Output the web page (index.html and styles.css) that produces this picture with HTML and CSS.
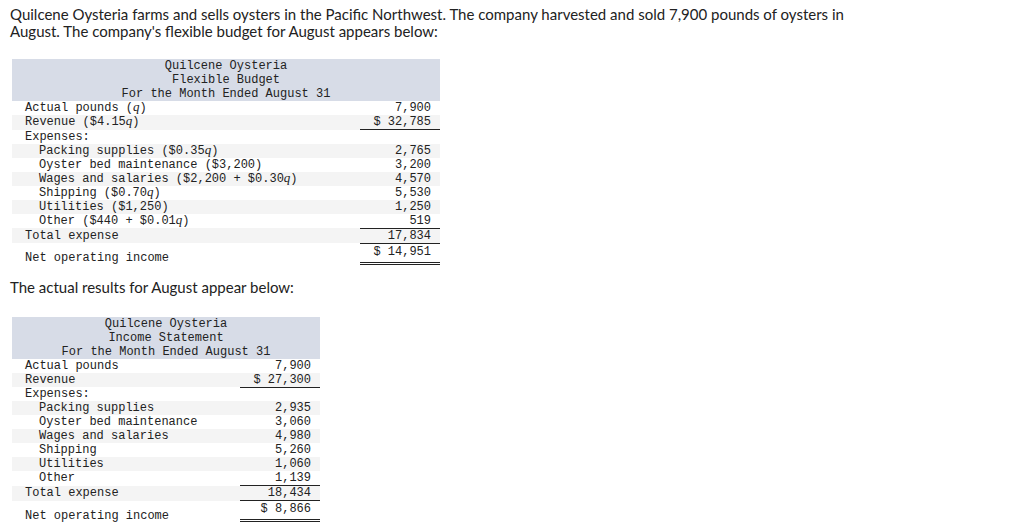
FILE: index.html
```html
<!DOCTYPE html>
<html>
<head>
<meta charset="utf-8">
<link rel="stylesheet" href="styles.css">
</head>
<body>
<p class="intro">Quilcene Oysteria farms and sells oysters in the Pacific Northwest. The company harvested and sold 7,900 pounds of oysters in<br>August. The company's flexible budget for August appears below:</p>

<table class="fin fin-wide">
  <thead>
    <tr><th colspan="2">Quilcene Oysteria<br>Flexible Budget<br>For the Month Ended August 31</th></tr>
  </thead>
  <tbody>
    <tr><td class="lbl">Actual pounds (<i>q</i>)</td><td class="num">7,900</td></tr>
    <tr><td class="lbl">Revenue ($4.15<i>q</i>)</td><td class="num under">$ 32,785</td></tr>
    <tr><td class="lbl">Expenses:</td><td class="num"></td></tr>
    <tr><td class="lbl sub">Packing supplies ($0.35<i>q</i>)</td><td class="num">2,765</td></tr>
    <tr><td class="lbl sub">Oyster bed maintenance ($3,200)</td><td class="num">3,200</td></tr>
    <tr><td class="lbl sub">Wages and salaries ($2,200 + $0.30<i>q</i>)</td><td class="num">4,570</td></tr>
    <tr><td class="lbl sub">Shipping ($0.70<i>q</i>)</td><td class="num">5,530</td></tr>
    <tr><td class="lbl sub">Utilities ($1,250)</td><td class="num">1,250</td></tr>
    <tr><td class="lbl sub">Other ($440 + $0.01<i>q</i>)</td><td class="num under">519</td></tr>
    <tr class="total"><td class="lbl">Total expense</td><td class="num under">17,834</td></tr>
    <tr class="net"><td class="lbl">Net operating income</td><td class="num dbl">$ 14,951</td></tr>
  </tbody>
</table>

<p class="intro second">The actual results for August appear below:</p>

<table class="fin fin-narrow">
  <thead>
    <tr><th colspan="2">Quilcene Oysteria<br>Income Statement<br>For the Month Ended August 31</th></tr>
  </thead>
  <tbody>
    <tr><td class="lbl">Actual pounds</td><td class="num">7,900</td></tr>
    <tr><td class="lbl">Revenue</td><td class="num under">$ 27,300</td></tr>
    <tr><td class="lbl">Expenses:</td><td class="num"></td></tr>
    <tr><td class="lbl sub">Packing supplies</td><td class="num">2,935</td></tr>
    <tr><td class="lbl sub">Oyster bed maintenance</td><td class="num">3,060</td></tr>
    <tr><td class="lbl sub">Wages and salaries</td><td class="num">4,980</td></tr>
    <tr><td class="lbl sub">Shipping</td><td class="num">5,260</td></tr>
    <tr><td class="lbl sub">Utilities</td><td class="num">1,060</td></tr>
    <tr><td class="lbl sub">Other</td><td class="num under">1,139</td></tr>
    <tr class="total"><td class="lbl">Total expense</td><td class="num under">18,434</td></tr>
    <tr class="net"><td class="lbl">Net operating income</td><td class="num dbl">$ 8,866</td></tr>
  </tbody>
</table>
</body>
</html>
```

FILE: styles.css
```css
html, body {
  margin: 0;
  padding: 0;
  background: #ffffff;
}

body {
  padding: 6px 10px 0 10px;
  color: #222222;
}

.intro {
  margin: 0;
  font-family: Lato, "Liberation Sans", sans-serif;
  font-size: 15px;
  line-height: 17px;
  color: #222222;
}

.intro.second {
  margin-top: 14px;
}

.fin {
  border-collapse: collapse;
  margin-left: 2px;
  font-family: "Courier New", Courier, "Nimbus Mono PS", "Nimbus Mono L", FreeMono, "Liberation Mono", monospace;
  font-size: 12px;
  color: #222222;
}

.fin-wide {
  width: 428px;
  margin-top: 19px;
}

.fin-narrow {
  width: 308px;
  margin-top: 21px;
}

.fin th {
  background: #d7dce7;
  font-weight: normal;
  text-align: center;
  line-height: 14px;
  padding: 0;
}

.fin td {
  line-height: 14px;
  padding: 0;
  white-space: nowrap;
}

.fin tbody tr:nth-child(even) td {
  background: #f4f4f4;
}

.fin .lbl {
  padding-left: 13px;
  text-align: left;
}

.fin .lbl.sub {
  padding-left: 27px;
}

.fin i {
  font-family: "Liberation Serif", serif;
  font-style: italic;
  font-size: 13px;
  line-height: 0;
}

.fin .num {
  width: 71px;
  padding-right: 9px;
  text-align: right;
}

.fin .num.under {
  border-bottom: 1px solid #222222;
}

.fin .total td {
  line-height: 14px;
  vertical-align: middle;
}

.fin .net .num {
  padding-top: 1px;
  padding-bottom: 3px;
  vertical-align: top;
  border-bottom: 3px double #222222;
}

.fin .net .lbl {
  vertical-align: bottom;
  line-height: 10px;
}
```
